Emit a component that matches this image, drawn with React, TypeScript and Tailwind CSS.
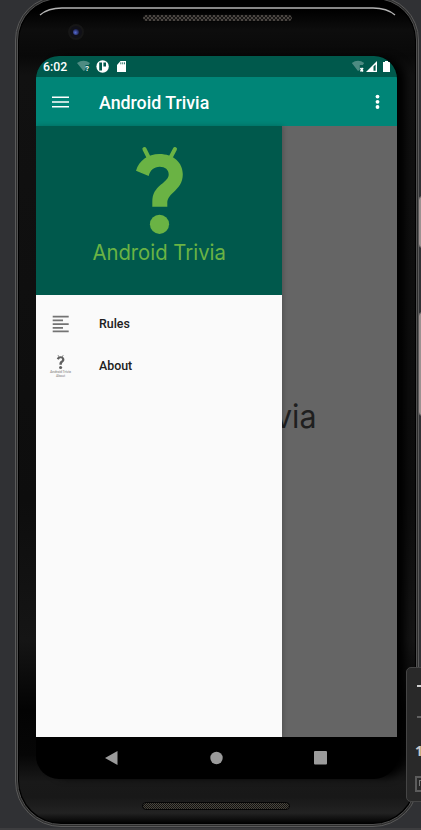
import React from "react";

function Speaker({ className }: { className: string }) {
  return (
    <div
      className={`h-[8px] rounded-full border border-[#050505] ${className}`}
    />
  );
}

function QuestionMark() {
  return (
    <>
      <path d="M144.4 149 148.4 157 M175 149 170.8 157" fill="none" stroke="currentColor" strokeWidth="4" strokeLinecap="round" />
      <path
        fill="currentColor"
        d="M136 170.7C139 160.5 148 154 159.3 154C173.5 154 182.8 162.5 182.8 174.3C182.8 183 178.500 187.500 173.500 192.200C169 196.300 167.300 199 167.300 203V206.800H152.300V202C152.300 193.500 155.500 189.500 161 184.600C166 180.200 168.700 178 168.700 174.400C168.700 169.700 165 166.800 159.800 166.800C154 166.800 150 170.400 148.700 176Z"
      />
      <circle cx="159.5" cy="224.3" r="9.6" fill="currentColor" />
    </>
  );
}

function StatusBar() {
  return (
    <div className="flex h-[21px] shrink-0 items-center bg-[#00594c] text-white">
      <span className="w-[41px] pt-px pl-[7px] text-[12.3px] leading-none font-medium">6:02</span>
      <svg className="h-[21px] w-[60px]" viewBox="77 56 60 21">
        <path d="M77 63Q83.500 58.500 90 63L88.600 65H85.500V70L83.500 71Z" fill="#4d8b82" />
        <text x="85.300" y="71.300" fontSize="7.500" fontWeight="700" fill="white">?</text>
        <circle cx="102.600" cy="66.500" r="6.200" fill="white" />
        <path d="M99.200 62.600H102V70.500H99.200ZM103.400 62.600H106V66.400H103.400Z" fill="#00594c" />
        <path d="M117 65 120.500 61H126V72H117Z" fill="white" />
        <path d="M120.800 62.300V64.300M122.700 62.300V64.300M124.500 62.300V64.300" stroke="#00594c" strokeWidth=".8" />
      </svg>
      <svg className="ml-auto h-[21px] w-[49px]" viewBox="348 56 49 21">
        <path d="M351.800 63Q358 58.500 364.200 63L362.800 65H359.800V70L358 71Z" fill="#4d8b82" />
        <path d="M360.500 68 363 71.500M363 68 360.500 71.500" stroke="white" strokeWidth="1.500" />
        <path d="M366 72 377 61V72Z" fill="white" />
        <path d="M373.500 66.500 375.600 64.500V70.800H373.500Z" fill="#00594c" />
        <path d="M383 62H385V61H388V62H390V72H383Z" fill="white" />
      </svg>
    </div>
  );
}

function AppBar() {
  return (
    <div className="flex h-[49px] shrink-0 items-center bg-[#008577] text-white">
      <svg className="ml-[16px] h-[14px] w-[17px]" viewBox="0 0 17 14" fill="white">
        <path d="M0 1.500H17V3H0ZM0 6.200H17V7.700H0ZM0 11H17V12.500H0Z" />
      </svg>
      <h1 className="ml-[30px] pt-[2px] text-[17.800px] leading-none font-medium whitespace-nowrap">Android Trivia</h1>
      <svg className="mr-[17px] ml-auto h-[18px] w-[5px]" viewBox="375 93 5 18" fill="white">
        <circle cx="377.500" cy="96.600" r="1.900" />
        <circle cx="377.500" cy="101.800" r="1.900" />
        <circle cx="377.500" cy="107" r="1.900" />
      </svg>
    </div>
  );
}

function Drawer() {
  return (
    <aside className="z-10 flex w-[246px] shrink-0 flex-col bg-[#fafafa] shadow-[1px_0_5px_rgba(0,0,0,0.22)]">
      <svg className="h-[169px] w-[246px] shrink-0 bg-[#00594c] text-[#6ab344]" viewBox="36 126 246 169">
        <QuestionMark />
        <text x="92.400" y="259.500" fontFamily="Inter, sans-serif" fontWeight="400" fontSize="21.700" textLength="133.500" lengthAdjust="spacingAndGlyphs" fill="currentColor">
          Android Trivia
        </text>
      </svg>
      <nav className="flex flex-col pt-[7px] text-[12.4px] font-medium text-[#202020]">
        <a className="flex h-[43px] items-center">
          <svg className="ml-[13px] size-[24px]" viewBox="49 311 24 24">
            <path d="M52.700 315.700H68.700M52.700 319.400H63M52.700 323.100H68.700M52.700 326.800H63M52.700 330.300H68.700" stroke="#737373" strokeWidth="1.800" />
          </svg>
          <span className="ml-[26px] pt-[2px]">Rules</span>
        </a>
        <a className="flex h-[42px] items-center">
          <svg className="ml-[13px] size-[24px]" viewBox="49 354 24 24">
            <g transform="translate(34.600 331.200) scale(.163 .162)" color="#606060">
              <QuestionMark />
            </g>
            <text x="60.500" y="373" textAnchor="middle" fontSize="3.700" textLength="21" fill="#999">Android Trivia</text>
            <text x="60.500" y="376.700" textAnchor="middle" fontSize="3.400" fill="#999">About</text>
          </svg>
          <span className="ml-[26px]">About</span>
        </a>
      </nav>
    </aside>
  );
}

export default function App() {
  return (
    <div className="relative h-[830px] w-[421px] overflow-hidden bg-[#303134] font-['Roboto',sans-serif]">
      <div className="absolute top-[196px] left-[418px] h-[52px] w-[6px] rounded-l-sm border border-[#555] bg-[#9b9190]" />
      <div className="absolute top-[312px] left-[418px] h-[104px] w-[6px] rounded-l-sm border border-[#555] bg-[#9b9190]" />

      <div className="relative -mt-[4px] ml-[15px] flex h-[831px] w-[404px] flex-col rounded-t-[44px] rounded-b-[46px] border border-[#5a5a5a] bg-[#2d2d2d] p-[1px]">
        <div className="flex min-h-0 grow flex-col rounded-t-[42px] rounded-b-[44px] border border-[#505050] bg-black p-[1px]">
          <div className="flex min-h-0 grow flex-col rounded-t-[41px] rounded-b-[43px] bg-[linear-gradient(180deg,#000_0px,#000_10px,#0d0d0d_30px,#090909_56px,#111_75px,#0d0d0d_500px,#151515_640px,#030303_710px,#060606_755px,#191919_782px,#181818_797px,#222_813px,#020202_100%)]">
            <div className="relative flex h-[56px] shrink-0 justify-center">
              <svg className="absolute top-[6px] left-[18px] h-[12px] w-[362px]" viewBox="0 0 362 12" fill="none" stroke="#b4b4b4">
                <path d="M3 9Q11 2 25 2H336Q350 2 358 9" strokeWidth="1.300" />
              </svg>
              <Speaker className="mt-[14px] w-[151px] bg-[repeating-conic-gradient(#4b4642_0%_25%,#171615_0%_50%)] bg-[length:4px_4px]" />
              <div className="absolute top-[24px] left-[49px] flex size-[16px] items-center justify-center rounded-full border-2 border-[#161616] bg-[#101018]">
                <div className="size-[6px] rounded-full bg-[radial-gradient(circle_at_40%_60%,#566bd5,#171b40_75%)]" />
              </div>
            </div>
            <div className="ml-[17px] flex h-[723px] w-[361px] shrink-0 flex-col overflow-hidden rounded-[23px] bg-black shadow-[10px_0_8px_-2px_#000]">
              <StatusBar />
              <AppBar />
              <main className="flex h-[611px] shrink-0">
                <Drawer />
                <section className="flex w-[115px] bg-[#656565]">
                  <svg className="h-[611px] w-[115px]" viewBox="282 126 115 611">
                    <text x="116.500" y="428.200" fontFamily="Inter, sans-serif" fontWeight="400" fontSize="32.500" textLength="200" lengthAdjust="spacingAndGlyphs" fill="#1f1f1f">
                      Android Trivia
                    </text>
                  </svg>
                </section>
              </main>
              <svg className="h-[42px] w-[361px] shrink-0" viewBox="36 737 361 42" fill="#9b9b9b">
                <path d="M105 758 117.500 751V765Z" />
                <circle cx="216.500" cy="758" r="6.200" />
                <rect x="314" y="751" width="13" height="13.500" rx="1" />
              </svg>
            </div>
            <Speaker className="mt-[23px] ml-[123px] w-[148px] bg-[repeating-conic-gradient(#4a463d_0%_25%,#121211_0%_50%)] bg-[length:2px_2px]" />
          </div>
        </div>
      </div>

      <div className="absolute top-[667px] left-[406px] flex h-[135px] w-[60px] flex-col rounded-[5px] border border-[#454545] bg-[#292929] pl-[10px]">
        <div className="mt-[17px] h-[2px] w-[14px] bg-[#cfcfcf]" />
        <div className="mt-[29px] h-[2px] w-[14px] bg-[#606060]" />
        <span className="mt-[25px] -ml-[2px] font-['Open_Sans',sans-serif] text-[14px] leading-[16px] font-bold text-[#c9c9c9]">1</span>
        <div className="mt-[17px] -ml-[2px] size-[16px] border-2 border-[#5c5c5c]">
          <div className="mt-[2px] ml-[2px] size-[6px] border-t border-l border-[#777]" />
        </div>
      </div>
      <div className="absolute bottom-0 h-[2px] w-full bg-[#3d3d3f]" />
    </div>
  );
}
